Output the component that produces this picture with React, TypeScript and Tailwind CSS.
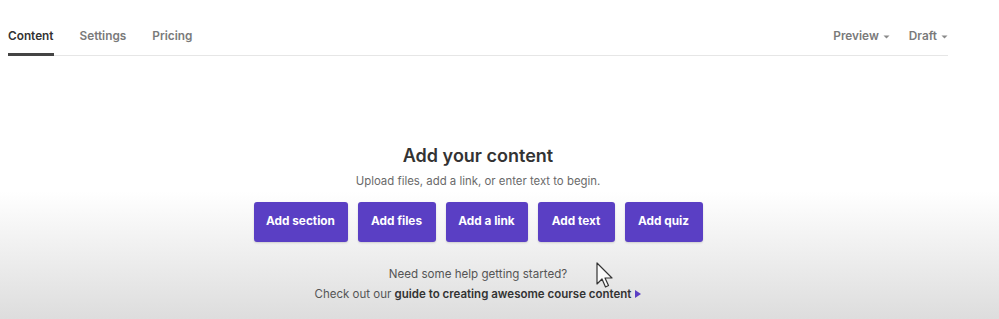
import React from "react";

const Caret = () => (
  <svg width="7" height="4" viewBox="0 0 7 4" className="ml-[4px] mt-[2px]">
    <path d="M0.5 0.5 L6.5 0.5 L3.5 3.5 Z" fill="#8a8a8a" />
  </svg>
);

export default function App() {
  const buttons = [
    { label: "Add section", w: "w-[94px]" },
    { label: "Add files", w: "w-[78px]" },
    { label: "Add a link", w: "w-[82px]" },
    { label: "Add text", w: "w-[77px]" },
    { label: "Add quiz", w: "w-[78px]" },
  ];
  return (
    <div
      className="relative h-[319px] w-[999px] overflow-hidden bg-[linear-gradient(to_bottom,#ffffff_60%,#dddddd_100%)]"
      style={{ fontFamily: "Inter, 'Noto Sans', sans-serif" }}
    >
      <div className="w-[956px]">
        <div className="mx-2 flex h-[56px] items-end justify-between border-b border-[#e6e6e6]">
          <div className="flex gap-[26px] text-[11.8px] font-semibold leading-4">
            <div className="-mb-px border-b-[3px] border-[#444] pb-[9px] text-[#333]">Content</div>
            <div className="pb-[11px] text-[#7a7a7a]">Settings</div>
            <div className="pb-[11px] text-[#7a7a7a]">Pricing</div>
          </div>
          <div className="flex gap-[19px] pb-[11px] text-[11.8px] font-semibold leading-4 text-[#7a7a7a]">
            <div className="flex items-center">Preview<Caret /></div>
            <div className="flex items-center">Draft<Caret /></div>
          </div>
        </div>

        <div className="flex flex-col items-center pt-[86px]">
          <h1 className="text-[18px] font-semibold leading-7 text-[#333]">Add your content</h1>
          <p className="mt-[3px] text-[11.4px] leading-4 text-[#6a6a6a]">
            Upload files, add a link, or enter text to begin.
          </p>
          <div className="mt-[13px] flex gap-[10px]">
            {buttons.map((b) => (
              <button
                key={b.label}
                className={`${b.w} h-[40px] rounded-[3px] bg-[#5a3fc4] text-[11.8px] font-bold text-white shadow-[0_1px_2px_rgba(0,0,0,0.15)]`}
              >
                {b.label}
              </button>
            ))}
          </div>
          <p className="mt-[24px] text-[11.6px] leading-4 text-[#555]">Need some help getting started?</p>
          <p className="mt-[4px] flex items-center text-[11.5px] leading-4 text-[#555]">
            Check out our&nbsp;<span className="font-semibold text-[#333]">guide to creating awesome course content</span>
            <svg width="6" height="8" viewBox="0 0 6 8" className="ml-[4px]">
              <path d="M0 0 L6 4 L0 8 Z" fill="#5a3fc4" />
            </svg>
          </p>
        </div>
      </div>

      <svg
        className="absolute left-[596px] top-[262px]"
        width="20"
        height="28"
        viewBox="0 0 20 28"
      >
        <path
          d="M1 1 L1 22 L6 17 L9.5 25 L12.5 23.5 L9 16 L16 16 Z"
          fill="#fafafa"
          stroke="#333"
          strokeWidth="1.2"
          strokeLinejoin="round"
        />
      </svg>
    </div>
  );
}
